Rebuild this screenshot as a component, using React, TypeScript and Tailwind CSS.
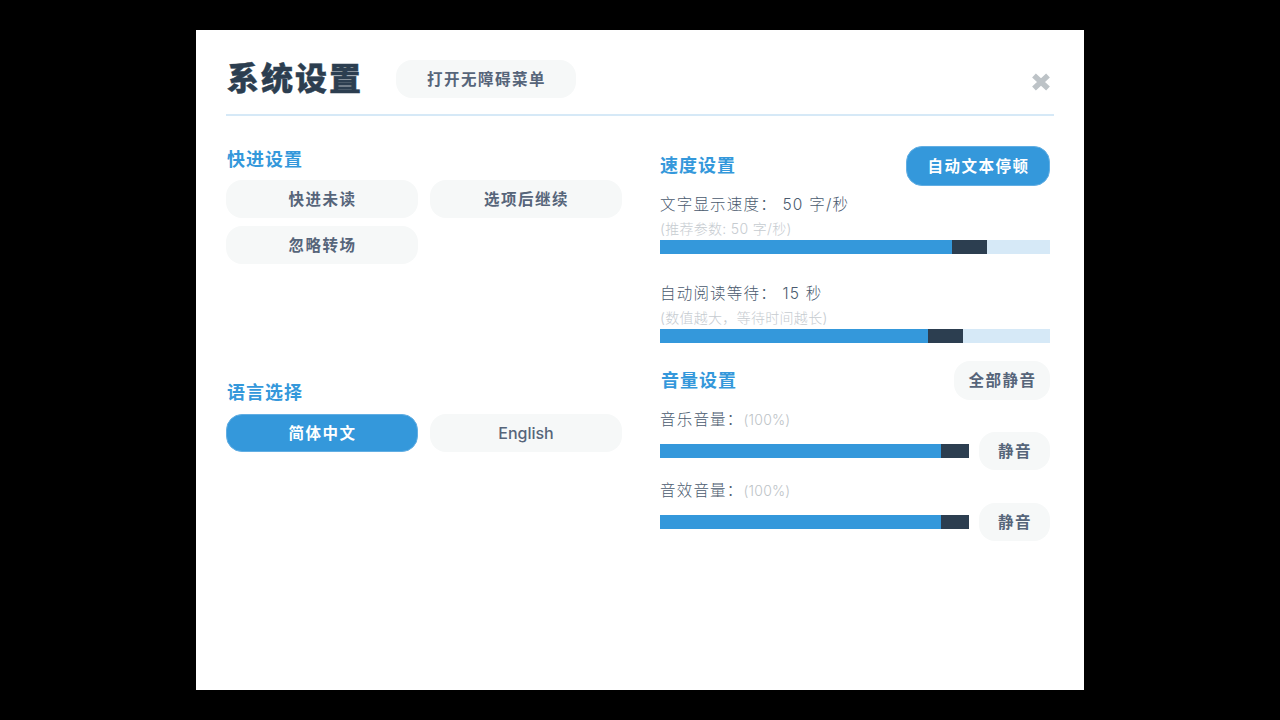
const font = { fontFamily: '"Inter", "Noto Sans CJK SC", sans-serif' };

const txt = "text-[15.5px] tracking-[1.5px] font-semibold pl-[1px] pt-[1px]";

function Btn({ children, active, className = "" }: { children: React.ReactNode; active?: boolean; className?: string }) {
  return (
    <div
      className={
        "flex items-center justify-center rounded-[16px] " +
        (active ? "bg-[#3498db] border border-[#62aee3] text-white " : "bg-[#f6f8f8] text-[#56657a] ") +
        className
      }
    >
      {children}
    </div>
  );
}

function Heading({ children }: { children: React.ReactNode }) {
  return <div className="text-[18px] leading-[26px] font-semibold tracking-[1px] text-[#3498db]">{children}</div>;
}

function Bar({ fill, knob, className = "" }: { fill: number; knob: number; className?: string }) {
  return (
    <div className={"flex h-[14px] bg-[#d6e9f7] " + className}>
      <div className="bg-[#3498db]" style={{ width: fill }} />
      <div className="bg-[#2c3e50]" style={{ width: knob }} />
    </div>
  );
}

function VolumeRow({ label }: { label: string }) {
  return (
    <div className="flex flex-col">
      <div className="flex items-center h-[25px]">
        <span className="text-[15.5px] tracking-[1.2px] font-light text-[#4a5a6e]">{label}</span>
        <span className="text-[14px] tracking-[0.2px] text-[#bdc3c7] font-light">(100%)</span>
      </div>
      <div className="flex items-center gap-[10px]">
        <Bar fill={281} knob={28} className="w-[309px]" />
        <Btn className={"w-[71px] h-[38px] " + txt}>静音</Btn>
      </div>
    </div>
  );
}

export default function App() {
  return (
    <div style={font} className="w-[1280px] h-[720px] bg-black flex items-center justify-center overflow-hidden">
      <div className="w-[888px] h-[660px] bg-white px-[30px] pt-[30px] flex flex-col">
        <div className="relative h-[56px] border-b-2 border-[#d6e9f7] flex items-start">
          <div className="text-[32px] leading-[38px] font-black tracking-[2px] [-webkit-text-stroke:0.4px_#2c3e50] text-[#2c3e50] w-[170px] pl-[1px]">系统设置</div>
          <Btn className={"w-[180px] h-[38px] " + txt}>打开无障碍菜单</Btn>
          <svg className="absolute right-[3px] top-[13px]" width="20" height="18" viewBox="0 0 20 18">
            <path d="M3 2.5 L17 15.5 M17 2.5 L3 15.5" stroke="#bdc3c7" strokeWidth="5.5" fill="none" />
          </svg>
        </div>
        <div className="flex mt-[30px]">
          <div className="w-[396px] flex flex-col">
            <div className="h-[34px] pt-[1px] pl-[1px]"><Heading>快进设置</Heading></div>
            <div className="grid grid-cols-[192px_192px] gap-x-[12px] gap-y-[8px]">
              <Btn className={"h-[38px] " + txt}>快进未读</Btn>
              <Btn className={"h-[38px] " + txt}>选项后继续</Btn>
              <Btn className={"h-[38px] " + txt}>忽略转场</Btn>
            </div>
            <div className="h-[34px] mt-[116px] pl-[1px]"><Heading>语言选择</Heading></div>
            <div className="grid grid-cols-[192px_192px] gap-x-[12px]">
              <Btn active className={"h-[38px] " + txt}>简体中文</Btn>
              <Btn className="h-[38px] text-[16px] font-medium">English</Btn>
            </div>
          </div>
          <div className="w-[390px] ml-[38px] flex flex-col">
            <div className="flex items-center justify-between h-[40px]">
              <Heading>速度设置</Heading>
              <Btn active className={"w-[144px] h-[40px] " + txt}>自动文本停顿</Btn>
            </div>
            <div className="mt-[7px] text-[15.5px] leading-[24px] tracking-[1.2px] font-light text-[#4a5a6e]">文字显示速度： 50 字/秒</div>
            <div className="text-[14px] leading-[23px] tracking-[0.3px] text-[#c6cbd0] font-light">(推荐参数: 50 字/秒)</div>
            <Bar fill={292} knob={35} />
            <div className="mt-[28px] text-[15.5px] leading-[24px] tracking-[1.2px] font-light text-[#4a5a6e]">自动阅读等待： 15 秒</div>
            <div className="text-[14px] leading-[23px] tracking-[0.3px] text-[#c6cbd0] font-light">(数值越大，等待时间越长)</div>
            <Bar fill={268} knob={35} />
            <div className="flex items-center justify-between h-[39px] mt-[18px]">
              <div className="pl-[1px] pt-[1px]"><Heading>音量设置</Heading></div>
              <Btn className={"w-[96px] h-[39px] " + txt}>全部静音</Btn>
            </div>
            <div className="mt-[7px] flex flex-col gap-[8px]">
              <VolumeRow label="音乐音量：" />
              <VolumeRow label="音效音量：" />
            </div>
          </div>
        </div>
      </div>
    </div>
  );
}
